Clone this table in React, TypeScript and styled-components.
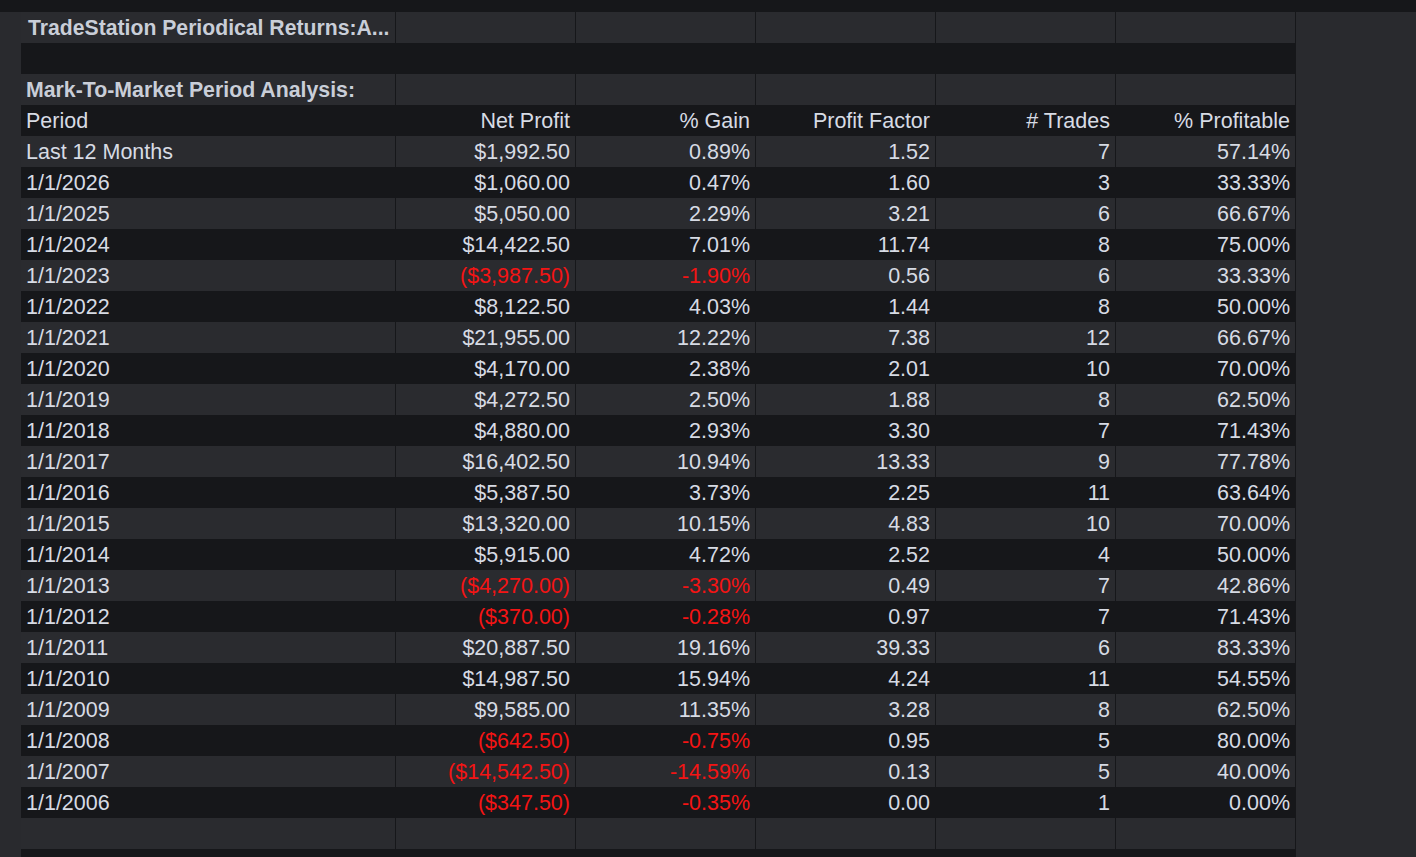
import React from "react";
import styled, { createGlobalStyle } from "styled-components";

const GlobalStyle = createGlobalStyle`
  html, body {
    margin: 0;
    padding: 0;
    background: #292a2e;
    height: 100%;
    overflow: hidden;
  }
  #root {
    min-height: 100vh;
  }
`;

const LIGHT = "#2a2b2f";
const DARK = "#16171a";
const TEXT = "#d7dbe4";
const RED = "#f41414";

const Page = styled.div`
  display: flex;
  flex-direction: column;
  min-height: 100vh;
  font-family: "Liberation Sans", Arial, sans-serif;
`;

const TopBar = styled.div`
  height: 12px;
  background: ${DARK};
  flex-shrink: 0;
`;

const Body = styled.div`
  display: flex;
  flex: 1;
  padding-left: 21px;
  background: #292a2e;
`;

const Table = styled.div`
  display: grid;
  grid-template-columns: 375px repeat(5, 180px);
  grid-auto-rows: 31px;
  width: 1275px;
  align-content: start;
`;

const Row = styled.div<{ $dark: boolean }>`
  display: contents;
  & > div {
    background: ${(p) => (p.$dark ? DARK : LIGHT)};
  }
`;

const Cell = styled.div<{ $align?: "left" | "right"; $red?: boolean; $bold?: boolean }>`
  box-sizing: border-box;
  border-right: 1px solid ${DARK};
  padding: 1px 5px 0 5px;
  font-size: ${(p) => (p.$bold ? "21.3px" : "21.5px")};
  line-height: 30px;
  font-weight: ${(p) => (p.$bold ? 700 : 400)};
  color: ${(p) => (p.$red ? RED : p.$bold ? "#c9ced8" : TEXT)};
  text-align: ${(p) => p.$align ?? "left"};
  white-space: nowrap;
  overflow: hidden;
  text-overflow: clip;
`;

const TitleCell = styled(Cell)`
  padding-left: 7px;
  padding-right: 0;
  font-size: 21.2px;
`;

const Spacer = styled.div`
  flex: 1;
  background: #292a2e;
`;

type DataRow = [string, string, string, string, string, string];

const data: DataRow[] = [
  ["Last 12 Months", "$1,992.50", "0.89%", "1.52", "7", "57.14%"],
  ["1/1/2026", "$1,060.00", "0.47%", "1.60", "3", "33.33%"],
  ["1/1/2025", "$5,050.00", "2.29%", "3.21", "6", "66.67%"],
  ["1/1/2024", "$14,422.50", "7.01%", "11.74", "8", "75.00%"],
  ["1/1/2023", "($3,987.50)", "-1.90%", "0.56", "6", "33.33%"],
  ["1/1/2022", "$8,122.50", "4.03%", "1.44", "8", "50.00%"],
  ["1/1/2021", "$21,955.00", "12.22%", "7.38", "12", "66.67%"],
  ["1/1/2020", "$4,170.00", "2.38%", "2.01", "10", "70.00%"],
  ["1/1/2019", "$4,272.50", "2.50%", "1.88", "8", "62.50%"],
  ["1/1/2018", "$4,880.00", "2.93%", "3.30", "7", "71.43%"],
  ["1/1/2017", "$16,402.50", "10.94%", "13.33", "9", "77.78%"],
  ["1/1/2016", "$5,387.50", "3.73%", "2.25", "11", "63.64%"],
  ["1/1/2015", "$13,320.00", "10.15%", "4.83", "10", "70.00%"],
  ["1/1/2014", "$5,915.00", "4.72%", "2.52", "4", "50.00%"],
  ["1/1/2013", "($4,270.00)", "-3.30%", "0.49", "7", "42.86%"],
  ["1/1/2012", "($370.00)", "-0.28%", "0.97", "7", "71.43%"],
  ["1/1/2011", "$20,887.50", "19.16%", "39.33", "6", "83.33%"],
  ["1/1/2010", "$14,987.50", "15.94%", "4.24", "11", "54.55%"],
  ["1/1/2009", "$9,585.00", "11.35%", "3.28", "8", "62.50%"],
  ["1/1/2008", "($642.50)", "-0.75%", "0.95", "5", "80.00%"],
  ["1/1/2007", "($14,542.50)", "-14.59%", "0.13", "5", "40.00%"],
  ["1/1/2006", "($347.50)", "-0.35%", "0.00", "1", "0.00%"],
];

const headers = ["Net Profit", "% Gain", "Profit Factor", "# Trades", "% Profitable"];

const EmptyCells = () => (
  <>
    {Array.from({ length: 5 }).map((_, i) => (
      <Cell key={i} />
    ))}
  </>
);

export default function App() {
  let idx = 0;
  const nextDark = () => idx++ % 2 === 1;
  return (
    <>
      <GlobalStyle />
      <Page>
        <TopBar />
        <Body>
          <Table>
            <Row $dark={nextDark()}>
              <TitleCell $bold>TradeStation Periodical Returns:A...</TitleCell>
              <EmptyCells />
            </Row>
            <Row $dark={nextDark()}>
              <Cell />
              <EmptyCells />
            </Row>
            <Row $dark={nextDark()}>
              <Cell $bold>Mark-To-Market Period Analysis:</Cell>
              <EmptyCells />
            </Row>
            <Row $dark={nextDark()}>
              <Cell>Period</Cell>
              {headers.map((h) => (
                <Cell key={h} $align="right">
                  {h}
                </Cell>
              ))}
            </Row>
            {data.map((r) => {
              const neg = r[1].startsWith("(");
              return (
                <Row key={r[0]} $dark={nextDark()}>
                  <Cell>{r[0]}</Cell>
                  <Cell $align="right" $red={neg}>{r[1]}</Cell>
                  <Cell $align="right" $red={neg}>{r[2]}</Cell>
                  <Cell $align="right">{r[3]}</Cell>
                  <Cell $align="right">{r[4]}</Cell>
                  <Cell $align="right">{r[5]}</Cell>
                </Row>
              );
            })}
            <Row $dark={nextDark()}>
              <Cell />
              <EmptyCells />
            </Row>
            <Row $dark={nextDark()}>
              <Cell />
              <EmptyCells />
            </Row>
          </Table>
          <Spacer />
        </Body>
      </Page>
    </>
  );
}
